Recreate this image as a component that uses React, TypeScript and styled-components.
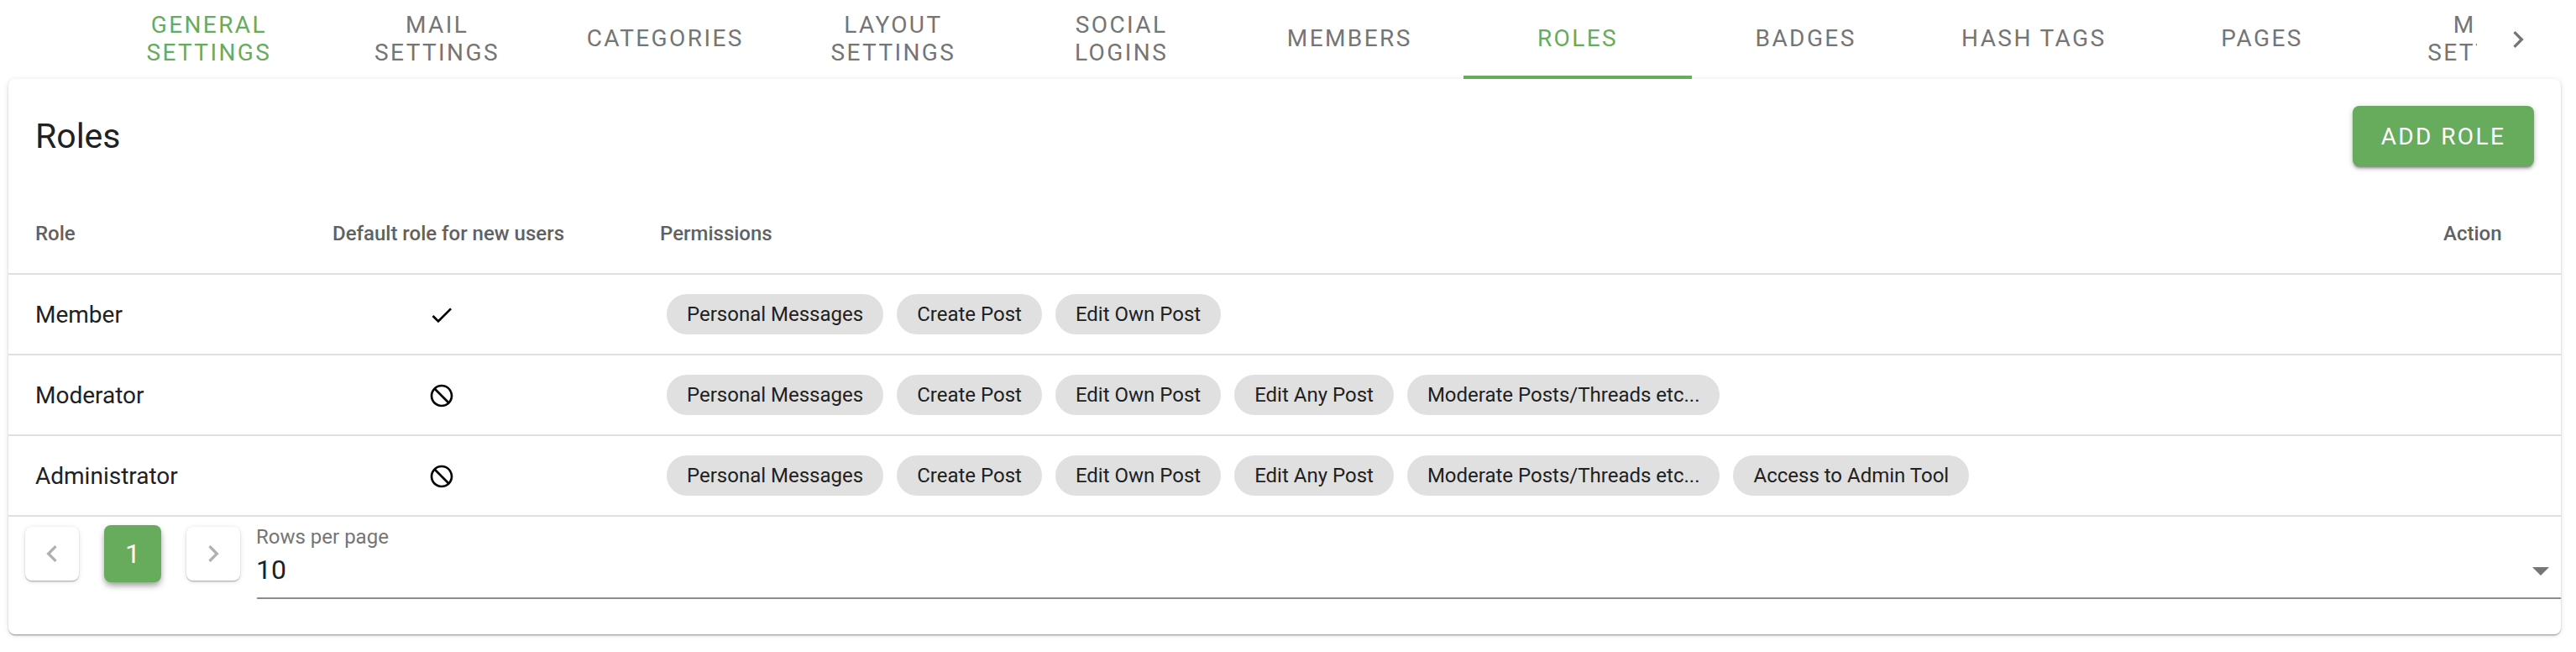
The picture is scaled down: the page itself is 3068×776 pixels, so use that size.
import React from "react";
import styled, { createGlobalStyle } from "styled-components";

const GlobalStyle = createGlobalStyle`
  html, body {
    margin: 0;
    padding: 0;
    background: #ffffff;
    font-family: Roboto, "Liberation Sans", sans-serif;
  }
  * {
    box-sizing: border-box;
  }
`;

const green = "#66ac5c";

const Page = styled.div`
  width: 3068px;
  height: 776px;
  padding: 0 18px 0 10px;
  overflow: hidden;
`;

const TabBar = styled.div`
  display: flex;
  height: 94px;
  padding-left: 103px;
`;

const TabTrack = styled.div`
  flex: 1;
  display: flex;
  overflow: hidden;
`;

const Tab = styled.div<{ $active?: boolean; $selected?: boolean }>`
  flex: 0 0 271.7px;
  height: 94px;
  display: flex;
  align-items: center;
  justify-content: center;
  padding: 1px 24px 0;
  text-align: center;
  font-size: 28px;
  line-height: 33px;
  letter-spacing: 2.4px;
  color: ${(p) => (p.$active ? green : "#757575")};
  border-bottom: 4px solid ${(p) => (p.$selected ? green : "transparent")};
`;

const ScrollButton = styled.div`
  flex: 0 0 100px;
  display: flex;
  align-items: center;
  justify-content: center;
  padding-right: 2px;
  color: #757575;
`;

const Card = styled.div`
  height: 661px;
  background: #fff;
  border-radius: 8px;
  box-shadow: 0 2px 2px -1px rgba(0, 0, 0, 0.3), 0 1px 2px 0 rgba(0, 0, 0, 0.14), 0 1px 6px 0 rgba(0, 0, 0, 0.12);
`;

const CardHeader = styled.div`
  height: 136px;
  display: flex;
  align-items: center;
  justify-content: space-between;
  padding: 0 32px;
`;

const Title = styled.div`
  font-size: 41px;
  color: #212121;
`;

const AddButton = styled.div`
  width: 216px;
  height: 72px;
  display: flex;
  align-items: center;
  justify-content: center;
  background: ${green};
  color: #fff;
  border-radius: 8px;
  font-size: 28px;
  letter-spacing: 2.4px;
  box-shadow: 0 3px 3px -2px rgba(0, 0, 0, 0.4), 0 3px 4px 0 rgba(0, 0, 0, 0.2), 0 1px 8px 0 rgba(0, 0, 0, 0.12);
`;

const Row = styled.div<{ $head?: boolean }>`
  display: grid;
  grid-template-columns: 320px 408px 1fr 140px;
  align-items: center;
  height: ${(p) => (p.$head ? "97px" : "96px")};
  border-bottom: 2px solid #e0e0e0;
`;

const HeadCell = styled.div<{ $inset?: number; $center?: boolean }>`
  font-size: 24px;
  font-weight: 500;
  color: #616161;
  padding-left: ${(p) => p.$inset ?? 0}px;
  text-align: ${(p) => (p.$center ? "center" : "left")};
`;

const RoleName = styled.div`
  font-size: 28px;
  color: #212121;
  padding-left: 32px;
`;

const DefaultCell = styled.div`
  display: flex;
  justify-content: center;
  padding: 2px 16px 0 0;
`;

const Chips = styled.div`
  display: flex;
  gap: 16px;
  padding-left: 56px;
`;

const Chip = styled.div`
  height: 48px;
  padding: 0 24px;
  display: flex;
  align-items: center;
  border-radius: 24px;
  background: #e0e0e0;
  color: #212121;
  font-size: 24px;
  white-space: nowrap;
`;

const Footer = styled.div`
  display: flex;
  align-items: flex-start;
  padding: 10px 0 0 20px;
`;

const Pager = styled.div`
  display: flex;
  align-items: center;
  gap: 30px;
  height: 68px;
`;

const PagerArrow = styled.div`
  width: 64px;
  height: 64px;
  display: flex;
  align-items: center;
  justify-content: center;
  border-radius: 8px;
  background: #fff;
  color: #b0b0b0;
  box-shadow: 0 2px 2px -1px rgba(0, 0, 0, 0.2), 0 1px 2px 0 rgba(0, 0, 0, 0.14), 0 1px 6px 0 rgba(0, 0, 0, 0.12);
`;

const PagerCurrent = styled.div`
  width: 68px;
  height: 68px;
  display: flex;
  align-items: center;
  justify-content: center;
  border-radius: 8px;
  background: ${green};
  color: #fff;
  font-size: 32px;
  box-shadow: 0 5px 10px -2px rgba(0, 0, 0, 0.35), 0 3px 6px 0 rgba(0, 0, 0, 0.14);
`;

const RowsField = styled.div`
  flex: 1;
  margin-left: 20px;
  height: 88px;
  position: relative;
  border-bottom: 2px solid #8c8c8c;
`;

const RowsLabel = styled.div`
  margin-left: -1px;
  font-size: 24px;
  line-height: 28px;
  color: #757575;
`;

const RowsValue = styled.div`
  margin: 6px 0 0 -1px;
  font-size: 32px;
  line-height: 38px;
  color: #212121;
`;

const SelectCaret = styled.div`
  position: absolute;
  right: 14px;
  top: 50px;
  width: 0;
  height: 0;
  border-left: 10px solid transparent;
  border-right: 10px solid transparent;
  border-top: 10px solid #757575;
`;

const CheckIcon = () => (
  <svg width="32" height="32" viewBox="0 0 24 24" fill="#000">
    <path d="M9 16.17 4.83 12l-1.42 1.41L9 19 21 7l-1.41-1.41z" />
  </svg>
);

const BlockIcon = () => (
  <svg width="32" height="32" viewBox="0 0 24 24" fill="#000">
    <path d="M12 2C6.48 2 2 6.48 2 12s4.48 10 10 10 10-4.48 10-10S17.52 2 12 2zm0 18c-4.42 0-8-3.58-8-8 0-1.85.63-3.55 1.69-4.9L16.9 18.31C15.55 19.37 13.85 20 12 20zm6.31-3.1L7.1 5.69C8.45 4.63 10.15 4 12 4c4.42 0 8 3.58 8 8 0 1.85-.63 3.55-1.69 4.9z" />
  </svg>
);

const ArrowRight = ({ size }: { size: number }) => (
  <svg width={size} height={size} viewBox="0 0 24 24" fill="currentColor">
    <path d="M8.59 16.59 13.17 12 8.59 7.41 10 6l6 6-6 6z" />
  </svg>
);

const ArrowLeft = ({ size }: { size: number }) => (
  <svg width={size} height={size} viewBox="0 0 24 24" fill="currentColor">
    <path d="M15.41 16.59 10.83 12l4.58-4.59L14 6l-6 6 6 6z" />
  </svg>
);

const tabs = [
  ["GENERAL SETTINGS", true],
  ["MAIL SETTINGS", false],
  ["CATEGORIES", false],
  ["LAYOUT SETTINGS", false],
  ["SOCIAL LOGINS", false],
  ["MEMBERS", false],
  ["ROLES", true],
  ["BADGES", false],
  ["HASH TAGS", false],
  ["PAGES", false],
  ["MENU SETTINGS", false],
] as const;

const base = ["Personal Messages", "Create Post", "Edit Own Post"];
const moderator = [...base, "Edit Any Post", "Moderate Posts/Threads etc..."];

const roles = [
  { name: "Member", isDefault: true, permissions: base },
  { name: "Moderator", isDefault: false, permissions: moderator },
  { name: "Administrator", isDefault: false, permissions: [...moderator, "Access to Admin Tool"] },
];

export default function App() {
  return (
    <Page>
      <GlobalStyle />
      <TabBar>
        <TabTrack>
          {tabs.map(([label, active]) => (
            <Tab key={label} $active={active} $selected={label === "ROLES"}>
              {label}
            </Tab>
          ))}
        </TabTrack>
        <ScrollButton>
          <ArrowRight size={40} />
        </ScrollButton>
      </TabBar>
      <Card>
        <CardHeader>
          <Title>Roles</Title>
          <AddButton>ADD ROLE</AddButton>
        </CardHeader>
        <Row $head>
          <HeadCell $inset={32}>Role</HeadCell>
          <HeadCell $center>Default role for new users</HeadCell>
          <HeadCell $inset={48}>Permissions</HeadCell>
          <HeadCell>Action</HeadCell>
        </Row>
        {roles.map((role) => (
          <Row key={role.name}>
            <RoleName>{role.name}</RoleName>
            <DefaultCell>{role.isDefault ? <CheckIcon /> : <BlockIcon />}</DefaultCell>
            <Chips>
              {role.permissions.map((p) => (
                <Chip key={p}>{p}</Chip>
              ))}
            </Chips>
            <div />
          </Row>
        ))}
        <Footer>
          <Pager>
            <PagerArrow>
              <ArrowLeft size={40} />
            </PagerArrow>
            <PagerCurrent>1</PagerCurrent>
            <PagerArrow>
              <ArrowRight size={40} />
            </PagerArrow>
          </Pager>
          <RowsField>
            <RowsLabel>Rows per page</RowsLabel>
            <RowsValue>10</RowsValue>
            <SelectCaret />
          </RowsField>
        </Footer>
      </Card>
    </Page>
  );
}
